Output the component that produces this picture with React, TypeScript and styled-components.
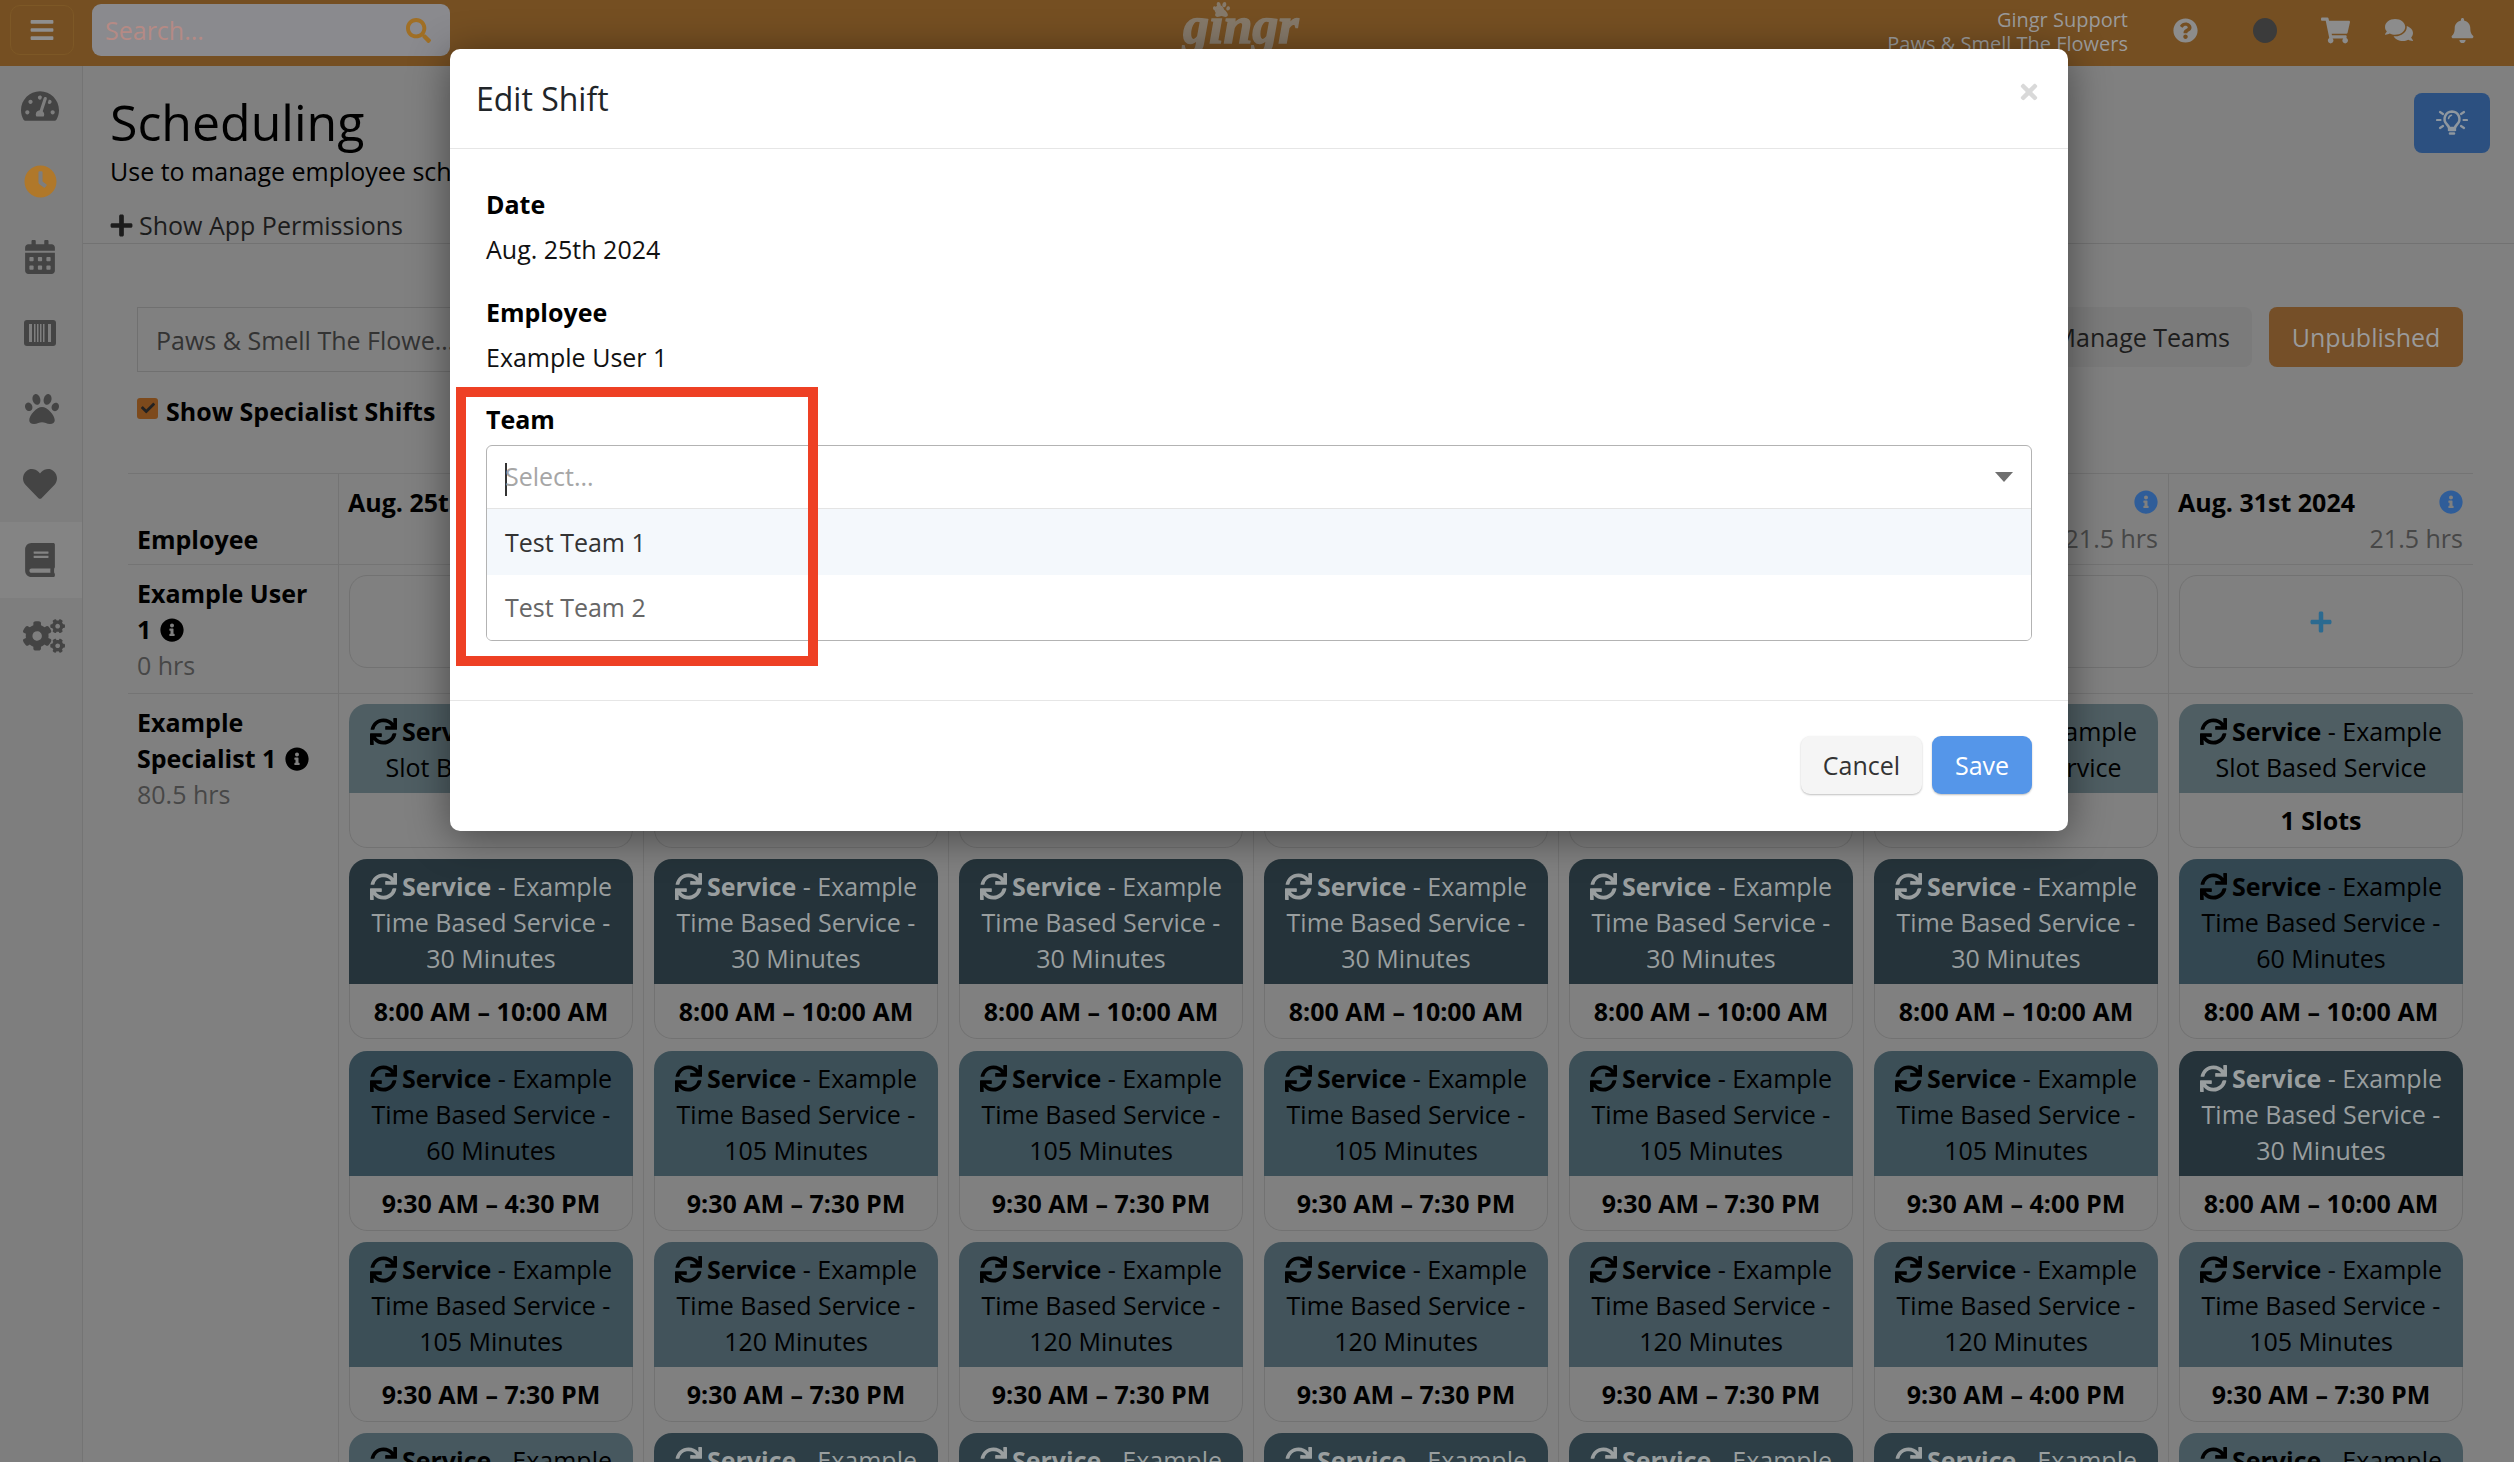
import React from "react";
import styled, { createGlobalStyle } from "styled-components";
import {
  FaBars,
  FaBell,
  FaBook,
  FaCalendarAlt,
  FaCheck,
  FaClock,
  FaCogs,
  FaComments,
  FaHeart,
  FaInfoCircle,
  FaPaw,
  FaPlus,
  FaQuestionCircle,
  FaSearch,
  FaShoppingCart,
  FaSync,
  FaTachometerAlt,
  FaTimes,
} from "react-icons/fa";

const GlobalStyle = createGlobalStyle`
  html, body {
    margin: 0;
    padding: 0;
    background: #808080;
  }
  body {
    font-family: "Open Sans", "Liberation Sans", sans-serif;
    font-size: 25px;
    line-height: 36px;
    color: #000;
  }
  * { box-sizing: border-box; }
`;

const Page = styled.div`
  position: relative;
  width: 2514px;
  height: 1462px;
  overflow: hidden;
  display: flex;
  flex-direction: column;
`;

const TopBar = styled.header`
  flex: 0 0 66px;
  height: 66px;
  display: flex;
  align-items: center;
  background: #754f22;
  padding: 0 39px 6px 0;
`;

const MenuButton = styled.div`
  width: 64px;
  height: 50px;
  margin-left: 10px;
  border: 1px solid #7d5826;
  border-radius: 10px;
  display: flex;
  align-items: center;
  justify-content: center;
  color: #8f8f8f;
  font-size: 26px;
`;

const SearchBox = styled.div`
  width: 358px;
  height: 52px;
  margin-left: 18px;
  padding: 0 19px 0 13px;
  border-radius: 9px;
  background: #8a8a8e;
  display: flex;
  align-items: center;
  justify-content: space-between;
  color: #b58a85;
  svg {
    color: #a06f25;
    font-size: 25px;
  }
`;

const Logo = styled.div`
  position: relative;
  align-self: flex-start;
  margin-left: 733px;
  width: 118px;
  height: 60px;
  font-family: "Liberation Serif", serif;
  font-weight: bold;
  font-style: italic;
  font-size: 52px;
  line-height: 52px;
  color: #85796a;
  -webkit-text-stroke: 1.5px #85796a;
  svg {
    position: absolute;
    left: 30px;
    top: 1px;
    font-size: 17px;
  }
`;

const UserInfo = styled.div`
  margin-left: auto;
  text-align: right;
  font-size: 20px;
  line-height: 24px;
  color: #9b9b9b;
  padding-top: 4px;
`;

const TopIcon = styled.span<{ $ml: number; $size: number; $color?: string }>`
  margin-left: ${(p) => p.$ml}px;
  display: flex;
  font-size: ${(p) => p.$size}px;
  color: ${(p) => p.$color || "#8c8c8c"};
`;

const Avatar = styled.span`
  margin-left: 55px;
  width: 24px;
  height: 25px;
  border-radius: 50%;
  background: #3b3b3b;
`;

const Shell = styled.div`
  flex: 1;
  display: flex;
  min-height: 0;
`;

const Sidebar = styled.nav`
  flex: 0 0 83px;
  padding-top: 2px;
  background: #7e7e7e;
  border-right: 1px solid #747474;
`;

const SideItem = styled.div<{ $active?: boolean; $color?: string; $size?: number; $shift?: number }>`
  height: 75.7px;
  display: flex;
  align-items: center;
  justify-content: center;
  padding-right: 2px;
  padding-left: ${(p) => p.$shift || 0}px;
  background: ${(p) => (p.$active ? "#848484" : "transparent")};
  color: ${(p) => p.$color || "#444"};
  font-size: ${(p) => p.$size || 34}px;
`;

const Main = styled.main`
  flex: 1;
  min-width: 0;
`;

const PageHeader = styled.div`
  height: 178px;
  border-bottom: 1px solid #727272;
  padding: 29px 24px 0 27px;
  display: flex;
  justify-content: space-between;
  align-items: flex-start;
`;

const PageTitle = styled.h1`
  margin: 0;
  font-weight: 400;
  font-size: 50px;
  line-height: 54px;
  color: #000;
`;

const PageSubtitle = styled.div`
  line-height: 36px;
  margin-top: 4px;
  white-space: nowrap;
`;

const PermissionsLink = styled.div`
  display: flex;
  align-items: center;
  gap: 5px;
  margin: 18px 0 0 -1px;
  color: #1c1c1c;
  svg {
    font-size: 25px;
  }
`;

const HintButton = styled.div`
  width: 76px;
  height: 60px;
  margin-top: -2px;
  border-radius: 8px;
  background: #2c5080;
  display: flex;
  align-items: center;
  justify-content: center;
`;

const Toolbar = styled.div`
  margin: 63px 51px 0 54px;
  display: flex;
  justify-content: space-between;
  height: 65px;
`;

const LocationSelect = styled.div`
  width: 500px;
  border: 1px solid #707070;
  padding-left: 18px;
  display: flex;
  align-items: center;
  color: #333;
`;

const LocationName = styled.span`
  display: block;
  width: 299px;
  overflow: hidden;
  white-space: nowrap;
  text-overflow: ellipsis;
`;

const ToolbarActions = styled.div`
  display: flex;
  gap: 17px;
  height: 60px;
`;

const ManageButton = styled.div`
  width: 260px;
  border-radius: 8px;
  background: #7b7b7b;
  display: flex;
  align-items: center;
  justify-content: flex-end;
  padding-right: 22px;
  color: #1d1d1d;
`;

const StatusButton = styled.div`
  width: 194px;
  border-radius: 8px;
  background: #754f28;
  display: flex;
  align-items: center;
  justify-content: center;
  color: #9a9a9a;
`;

const SpecialistToggle = styled.label`
  margin: 21px 0 0 54px;
  display: flex;
  align-items: center;
  gap: 8px;
  font-weight: 700;
  height: 36px;
`;

const CheckBox = styled.span`
  width: 21px;
  height: 21px;
  border-radius: 3px;
  background: #7d4a1c;
  display: flex;
  align-items: center;
  justify-content: center;
  font-size: 14px;
  color: #222;
  margin-top: -6px;
`;

const ScheduleTable = styled.div`
  margin: 44px 0 0 45px;
  width: 2345px;
  border-top: 1px solid #747474;
`;

const TableRow = styled.div`
  display: grid;
  grid-template-columns: 210px repeat(7, 305px);
  border-bottom: 1px solid #747474;
`;

const EmployeeHead = styled.div`
  height: 90px;
  padding: 47px 0 0 9px;
  font-weight: 700;
`;

const DayHead = styled.div`
  border-left: 1px solid #747474;
  padding: 10px 10px 0 9px;
`;

const DayTop = styled.div`
  display: flex;
  justify-content: space-between;
  align-items: center;
  font-weight: 700;
  svg {
    color: #2f5d99;
    font-size: 24px;
  }
`;

const Hours = styled.div`
  text-align: right;
  color: #474747;
  margin-top: 0;
`;

const EmployeeCell = styled.div`
  padding: 10px 20px 0 9px;
  font-weight: 700;
  svg {
    font-size: 24px;
    vertical-align: -3px;
    margin-left: 2px;
  }
`;

const MutedHours = styled.div`
  font-weight: 400;
  color: #474747;
`;

const DayCell = styled.div<{ $bottom: number }>`
  border-left: 1px solid #747474;
  padding: 10px 10px ${(p) => p.$bottom}px 10px;
  display: flex;
  flex-direction: column;
  gap: 11.3px;
`;

const AddCard = styled.div`
  height: 93px;
  border: 1px solid #727272;
  border-radius: 18px;
  display: flex;
  align-items: center;
  justify-content: center;
  color: #2b6a90;
  font-size: 24px;
`;

const ShiftCard = styled.div`
  border-radius: 18px;
  overflow: hidden;
  text-align: center;
`;

const ShiftHeader = styled.div<{ $bg: string; $faded?: boolean }>`
  background: ${(p) => p.$bg};
  color: ${(p) => (p.$faded ? "#999e9f" : "#000")};
  padding: 9px 4px 8px;
  svg {
    font-size: 27px;
    vertical-align: -4px;
    margin-right: 5px;
  }
`;

const ShiftTime = styled.div`
  height: 55px;
  border: 1px solid #727272;
  border-top: 0;
  border-radius: 0 0 18px 18px;
  display: flex;
  align-items: center;
  justify-content: center;
  font-weight: 700;
`;

const Modal = styled.div`
  position: absolute;
  left: 450px;
  top: 49px;
  width: 1618px;
  height: 782px;
  background: #fff;
  border-radius: 10px;
  box-shadow: 0 6px 42px rgba(0, 0, 0, 0.45);
`;

const ModalHeader = styled.div`
  height: 100px;
  padding: 0 27px 0 26px;
  border-bottom: 1px solid #e6e6e6;
  display: flex;
  justify-content: space-between;
`;

const ModalTitle = styled.h2`
  margin: 0;
  padding-top: 30px;
  font-weight: 400;
  font-size: 32px;
  line-height: 40px;
  color: #212529;
`;

const CloseIcon = styled.span`
  color: #d9d9d9;
  font-size: 24px;
  padding-top: 31px;
  line-height: 24px;
`;

const ModalBody = styled.div`
  padding: 37px 36px 59px;
  height: 551px;
  color: #111;
`;

const FieldLabel = styled.div`
  font-weight: 700;
  color: #000;
`;

const FieldValue = styled.div`
  margin: 9px 0 26.5px;
`;

const Combo = styled.div`
  margin-top: 8px;
  border: 1px solid #b3b3b3;
  border-radius: 6px;
  overflow: hidden;
`;

const ComboInput = styled.div`
  height: 63px;
  border-bottom: 1px solid #e4e4e4;
  padding: 0 18px 0 18px;
  display: flex;
  align-items: center;
  justify-content: space-between;
  color: #a6a6a6;
`;

const TextCaret = styled.span`
  display: inline-block;
  width: 2px;
  height: 33px;
  margin-right: -2px;
  vertical-align: middle;
  background: #333;
`;

const ComboArrow = styled.span`
  width: 0;
  height: 0;
  border-left: 9px solid transparent;
  border-right: 9px solid transparent;
  border-top: 10px solid #6f6f6f;
`;

const ComboOption = styled.div<{ $active?: boolean }>`
  height: 65.5px;
  padding-left: 18px;
  display: flex;
  align-items: center;
  background: ${(p) => (p.$active ? "#f4f8fc" : "#fff")};
  color: ${(p) => (p.$active ? "#333" : "#666")};
`;

const ModalFooter = styled.div`
  border-top: 1px solid #e6e6e6;
  padding: 35px 36px 0;
  display: flex;
  justify-content: flex-end;
  gap: 10px;
`;

const ModalButton = styled.div<{ $primary?: boolean }>`
  height: 58px;
  width: ${(p) => (p.$primary ? 100 : 121)}px;
  border-radius: 9px;
  display: flex;
  align-items: center;
  justify-content: center;
  background: ${(p) => (p.$primary ? "#5596e9" : "#f5f5f5")};
  color: ${(p) => (p.$primary ? "#fff" : "#333")};
  box-shadow: 0 1px 2px rgba(0, 0, 0, 0.25);
`;

const Annotation = styled.div`
  position: absolute;
  left: 6px;
  top: 338px;
  width: 362px;
  height: 279px;
  border: 10px solid #ee4024;
  pointer-events: none;
`;

const BarcodeIcon = () => (
  <svg width="32" height="26" viewBox="0 0 32 26">
    <rect width="32" height="26" rx="3" fill="#444" />
    <g fill="#7e7e7e">
      <rect x="5" y="4" width="3" height="18" />
      <rect x="10" y="4" width="1.5" height="18" />
      <rect x="13" y="4" width="1.5" height="18" />
      <rect x="16" y="4" width="1.5" height="18" />
      <rect x="19" y="4" width="1.5" height="18" />
      <rect x="24" y="4" width="3" height="18" />
    </g>
  </svg>
);

const BulbIcon = () => (
  <svg width="32" height="30" viewBox="0 0 32 30" fill="none" stroke="#8f979f" strokeLinecap="round">
    <path d="M16 3.5a7.5 7.5 0 0 0-5 13c1.2 1.2 1.8 2.4 2 3.5h6c.2-1.1.8-2.3 2-3.5a7.5 7.5 0 0 0-5-13z" strokeWidth="2.5" fill="#2c5080" />
    <path d="M12.5 10.5c.3-1.7 1.5-3 3-3.3" strokeWidth="1.5" />
    <path d="M13 22h6M14 25.5h4" strokeWidth="2.6" />
    <path d="M4 4l3 2M28 4l-3 2M1 12h3.5M27.5 12H31M4 20l3-2M28 20l-3-2" strokeWidth="2.2" />
  </svg>
);

const DARK = "#25333a";
const TEAL = "#334751";
const MID = "#3c4f57";
const SOFT = "#42535b";
const LIGHT = "#47585f";
const DARK2 = "#2d3e46";

type Shift = { mins: number; time: string; bg: string; faded?: boolean };

const EARLY = "8:00 AM – 10:00 AM";
const LONG = "9:30 AM – 7:30 PM";
const MIDDAY = "9:30 AM – 4:30 PM";
const SHORT = "9:30 AM – 4:00 PM";

const regularWeekday: Shift[] = [
  { mins: 30, time: EARLY, bg: DARK, faded: true },
  { mins: 105, time: LONG, bg: MID },
  { mins: 120, time: LONG, bg: SOFT },
  { mins: 30, time: EARLY, bg: DARK2, faded: true },
];

const days: { label: string; shifts: Shift[] }[] = [
  {
    label: "Aug. 25th 2024",
    shifts: [
      { mins: 30, time: EARLY, bg: DARK, faded: true },
      { mins: 60, time: MIDDAY, bg: TEAL },
      { mins: 105, time: LONG, bg: MID },
      { mins: 120, time: LONG, bg: LIGHT },
    ],
  },
  { label: "Aug. 26th 2024", shifts: regularWeekday },
  { label: "Aug. 27th 2024", shifts: regularWeekday },
  { label: "Aug. 28th 2024", shifts: regularWeekday },
  { label: "Aug. 29th 2024", shifts: regularWeekday },
  {
    label: "Aug. 30th 2024",
    shifts: [
      { mins: 30, time: EARLY, bg: DARK, faded: true },
      { mins: 105, time: SHORT, bg: MID },
      { mins: 120, time: SHORT, bg: SOFT },
      { mins: 30, time: EARLY, bg: DARK2, faded: true },
    ],
  },
  {
    label: "Aug. 31st 2024",
    shifts: [
      { mins: 60, time: EARLY, bg: TEAL },
      { mins: 30, time: EARLY, bg: DARK, faded: true },
      { mins: 105, time: LONG, bg: SOFT },
      { mins: 120, time: LONG, bg: LIGHT },
    ],
  },
];

const ServiceTitle: React.FC = () => (
  <>
    <FaSync />
    <b>Service</b> - Example
  </>
);

const App: React.FC = () => {
  return (
    <Page>
      <GlobalStyle />
      <TopBar>
        <MenuButton>
          <FaBars />
        </MenuButton>
        <SearchBox>
          Search...
          <FaSearch />
        </SearchBox>
        <Logo>
          <FaPaw />
          gingr
        </Logo>
        <UserInfo>
          Gingr Support
          <br />
          Paws &amp; Smell The Flowers
        </UserInfo>
        <TopIcon $ml={45} $size={25}>
          <FaQuestionCircle />
        </TopIcon>
        <Avatar />
        <TopIcon $ml={44} $size={29}>
          <FaShoppingCart />
        </TopIcon>
        <TopIcon $ml={35} $size={28}>
          <FaComments />
        </TopIcon>
        <TopIcon $ml={37} $size={25}>
          <FaBell />
        </TopIcon>
      </TopBar>

      <Shell>
        <Sidebar>
          <SideItem $size={38}>
            <FaTachometerAlt />
          </SideItem>
          <SideItem $color="#b0782a" $size={33}>
            <FaClock />
          </SideItem>
          <SideItem $size={34}>
            <FaCalendarAlt />
          </SideItem>
          <SideItem>
            <BarcodeIcon />
          </SideItem>
          <SideItem $size={34} $shift={3}>
            <FaPaw />
          </SideItem>
          <SideItem $size={34}>
            <FaHeart />
          </SideItem>
          <SideItem $active $size={34}>
            <FaBook />
          </SideItem>
          <SideItem $size={42} $shift={7}>
            <FaCogs />
          </SideItem>
        </Sidebar>

        <Main>
          <PageHeader>
            <div>
              <PageTitle>Scheduling</PageTitle>
              <PageSubtitle>Use to manage employee schedules and shifts.</PageSubtitle>
              <PermissionsLink>
                <FaPlus />
                Show App Permissions
              </PermissionsLink>
            </div>
            <HintButton>
              <BulbIcon />
            </HintButton>
          </PageHeader>

          <Toolbar>
            <LocationSelect>
              <LocationName>Paws &amp; Smell The Flowers</LocationName>
            </LocationSelect>
            <ToolbarActions>
              <ManageButton>Manage Teams</ManageButton>
              <StatusButton>Unpublished</StatusButton>
            </ToolbarActions>
          </Toolbar>

          <SpecialistToggle>
            <CheckBox>
              <FaCheck />
            </CheckBox>
            Show Specialist Shifts
          </SpecialistToggle>

          <ScheduleTable>
            <TableRow>
              <EmployeeHead>Employee</EmployeeHead>
              {days.map((day) => (
                <DayHead key={day.label}>
                  <DayTop>
                    {day.label}
                    <FaInfoCircle />
                  </DayTop>
                  <Hours>21.5 hrs</Hours>
                </DayHead>
              ))}
            </TableRow>

            <TableRow>
              <EmployeeCell>
                Example User 1 <FaInfoCircle />
                <MutedHours>0 hrs</MutedHours>
              </EmployeeCell>
              {days.map((day) => (
                <DayCell key={day.label} $bottom={25}>
                  <AddCard>
                    <FaPlus />
                  </AddCard>
                </DayCell>
              ))}
            </TableRow>

            <TableRow>
              <EmployeeCell>
                Example Specialist 1 <FaInfoCircle />
                <MutedHours>80.5 hrs</MutedHours>
              </EmployeeCell>
              {days.map((day) => (
                <DayCell key={day.label} $bottom={10}>
                  <ShiftCard>
                    <ShiftHeader $bg="#4f5e63">
                      <ServiceTitle />
                      <br />
                      Slot Based Service
                    </ShiftHeader>
                    <ShiftTime>1 Slots</ShiftTime>
                  </ShiftCard>
                  {day.shifts.map((shift, i) => (
                    <ShiftCard key={i}>
                      <ShiftHeader $bg={shift.bg} $faded={shift.faded}>
                        <ServiceTitle />
                        <br />
                        Time Based Service -
                        <br />
                        {shift.mins} Minutes
                      </ShiftHeader>
                      <ShiftTime>{shift.time}</ShiftTime>
                    </ShiftCard>
                  ))}
                </DayCell>
              ))}
            </TableRow>
          </ScheduleTable>
        </Main>
      </Shell>

      <Modal>
        <ModalHeader>
          <ModalTitle>Edit Shift</ModalTitle>
          <CloseIcon>
            <FaTimes />
          </CloseIcon>
        </ModalHeader>
        <ModalBody>
          <FieldLabel>Date</FieldLabel>
          <FieldValue>Aug. 25th 2024</FieldValue>
          <FieldLabel>Employee</FieldLabel>
          <FieldValue>Example User 1</FieldValue>
          <FieldLabel>Team</FieldLabel>
          <Combo>
            <ComboInput>
              <span>
                <TextCaret />
                Select...
              </span>
              <ComboArrow />
            </ComboInput>
            <ComboOption $active>Test Team 1</ComboOption>
            <ComboOption>Test Team 2</ComboOption>
          </Combo>
        </ModalBody>
        <ModalFooter>
          <ModalButton>Cancel</ModalButton>
          <ModalButton $primary>Save</ModalButton>
        </ModalFooter>
        <Annotation />
      </Modal>
    </Page>
  );
};

export default App;
